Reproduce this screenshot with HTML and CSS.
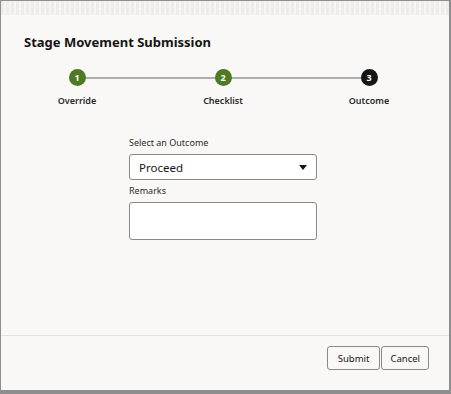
FILE: index.html
```html
<!DOCTYPE html>
<html lang="en">
<head>
    <meta charset="UTF-8">
    <title>Stage Movement Submission</title>
    <link rel="stylesheet" href="styles.css">
</head>
<body>
    <div class="dialog">
        <div class="ghost-bar"></div>
        <h1 class="title">Stage Movement Submission</h1>
        <div class="stepper">
            <div class="step done">
                <span class="dot">1</span>
                <span class="step-label">Override</span>
            </div>
            <div class="step done">
                <span class="dot">2</span>
                <span class="step-label">Checklist</span>
            </div>
            <div class="step current">
                <span class="dot">3</span>
                <span class="step-label">Outcome</span>
            </div>
        </div>
        <form class="outcome-form">
            <label class="field-label">Select an Outcome</label>
            <div class="select-box">
                <span>Proceed</span>
                <span class="caret"></span>
            </div>
            <label class="field-label">Remarks</label>
            <div class="remarks-box"></div>
        </form>
        <div class="footer">
            <button type="button" class="btn btn-submit">Submit</button>
            <button type="button" class="btn">Cancel</button>
        </div>
    </div>
</body>
</html>
```

FILE: styles.css
```css
body {
    margin: 0;
    background-color: #8e8e8e;
    font-family: "Noto Sans", "Open Sans", sans-serif;
    color: #161513;
    height: 394px;
    overflow: hidden;
}

.dialog {
    margin: 1px 2px 0 1px;
    height: 389px;
    background-color: #f9f8f6;
    display: flex;
    flex-direction: column;
    border-radius: 2px 2px 0 0;
}

.ghost-bar {
    height: 14px;
    background: repeating-linear-gradient(90deg, #ecebe9 0 3px, #f6f5f3 3px 5px);
    opacity: 0.9;
}

.title {
    margin: 17px 0 0 23px;
    font-size: 13px;
    font-weight: 700;
    line-height: 20px;
}

.stepper {
    display: flex;
    justify-content: space-between;
    margin: 16px 40px 0 36px;
    position: relative;
}

.stepper::before {
    content: "";
    position: absolute;
    left: 40px;
    right: 40px;
    top: 9px;
    height: 2px;
    background-color: #adadad;
}

.step {
    width: 80px;
    display: flex;
    flex-direction: column;
    align-items: center;
    position: relative;
}

.dot {
    width: 17px;
    height: 17px;
    border-radius: 50%;
    color: #fff;
    font-size: 9px;
    font-weight: 700;
    display: flex;
    align-items: center;
    justify-content: center;
    margin-top: 1px;
}

.done .dot {
    background-color: #4d7a22;
}

.current .dot {
    background-color: #161513;
}

.step-label {
    margin-top: 8px;
    font-size: 9px;
    font-weight: 600;
    color: #2c2a28;
}

.outcome-form {
    width: 188px;
    margin: 29px 0 0 128px;
    display: flex;
    flex-direction: column;
}

.field-label {
    font-size: 9px;
    color: #2c2a28;
    line-height: 14px;
}

.select-box {
    margin-top: 4px;
    height: 24px;
    border: 1px solid #8b8a88;
    border-radius: 3px;
    background: #fff;
    display: flex;
    align-items: center;
    justify-content: space-between;
    padding: 0 9px;
    font-size: 11.5px;
    margin-bottom: 4px;
}

.caret {
    width: 0;
    height: 0;
    border-left: 4px solid transparent;
    border-right: 4px solid transparent;
    border-top: 5px solid #161513;
}

.remarks-box {
    margin-top: 4px;
    height: 36px;
    border: 1px solid #8b8a88;
    border-radius: 3px;
    background: #fff;
}

.footer {
    margin-top: auto;
    border-top: 1px solid #e4e2df;
    height: 55px;
    display: flex;
    justify-content: flex-end;
    align-items: flex-start;
    padding: 10px 20px 0 0;
    box-sizing: border-box;
    gap: 1px;
}

.btn {
    height: 24px;
    padding: 0 8px;
    border: 1px solid #8b8a88;
    border-radius: 3px;
    background: #f9f8f6;
    font-family: inherit;
    font-size: 9.5px;
    color: #161513;
}

.btn-submit {
    padding: 0 10px;
}
```
